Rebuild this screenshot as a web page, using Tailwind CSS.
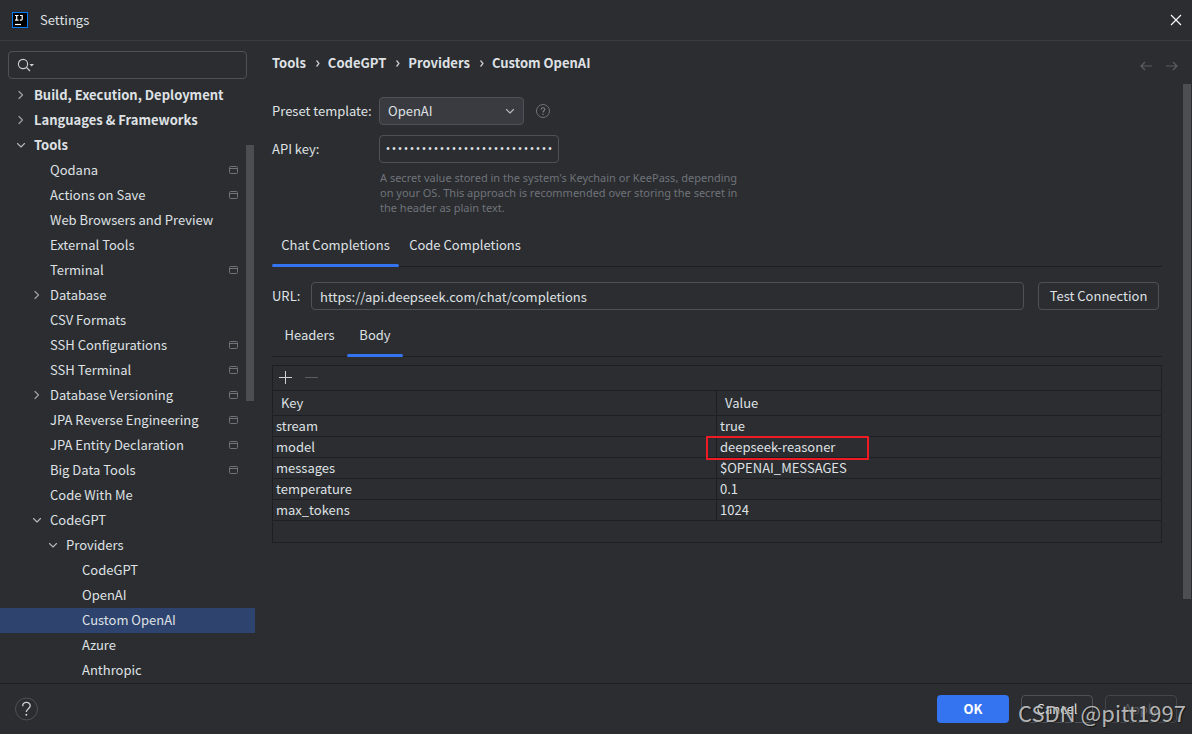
<!DOCTYPE html>
<html lang="en">
<head>
<meta charset="utf-8">
<meta name="viewport" content="width=device-width, initial-scale=1">
<title>Settings</title>
<script src="https://cdn.jsdelivr.net/npm/@tailwindcss/browser@4"></script>
</head>
<body class="relative flex min-h-screen flex-col overflow-x-hidden bg-[#2b2d30] font-['Noto_Sans_CJK_SC','Open_Sans',sans-serif] text-[13px] leading-5 text-[#dfe1e5]">

<svg class="hidden" aria-hidden="true">
  <symbol id="right" viewBox="0 0 16 16"><path d="M6 4.500 9.500 8 6 11.500" fill="none" stroke="#9da0a8" stroke-width="1.2" stroke-linecap="round" stroke-linejoin="round"/></symbol>
  <symbol id="down" viewBox="0 0 16 16"><path d="M4.500 6.500 8 10 11.500 6.500" fill="none" stroke="#b4b8bf" stroke-width="1.1" stroke-linecap="round" stroke-linejoin="round"/></symbol>
  <symbol id="project" viewBox="0 0 10 10"><rect x="0.5" y="1.5" width="8" height="7" rx="1" fill="none" stroke="#6f737a"/><path d="M1 3.5H8" stroke="#6f737a"/></symbol>
</svg>

<header class="flex h-[41px] items-center border-b border-[#393b40] pl-3 pr-2.5">
  <svg class="size-4" viewBox="0 0 16 16" aria-hidden="true">
    <rect width="16" height="16" fill="#087cfa"/><rect x="1" y="1" width="14" height="14" fill="#000"/>
    <path d="M3 3.500H6.500M4.700 3.500V8M3 8.200H6.500M8 3.500H10.700M10.200 3V7Q10.200 8.200 9.200 8.200H7.800" fill="none" stroke="#fff" stroke-width="1.2"/>
    <path d="M3 12.500H9" stroke="#fff" stroke-width="1.200"/>
  </svg>
  <h1 class="ml-3 flex-1">Settings</h1>
  <button type="button" aria-label="Close" class="size-3"><svg class="size-3" viewBox="0 0 12 12"><path d="M1 1 11 11M11 1 1 11" stroke="#fff" stroke-width="1.1" fill="none"/></svg></button>
</header>

<div class="flex flex-1">
  <aside class="relative w-[255px] shrink-0 pt-2.5">
    <label class="mx-2 flex h-7 items-center rounded border border-[#4e5157] pl-2">
      <svg class="h-4 w-5 shrink-0" viewBox="0 0 20 16" aria-hidden="true"><circle cx="6" cy="7" r="4.600" fill="none" stroke="#ced0d6" stroke-width="1.1"/><path d="M9.400 10.400 13 14" stroke="#ced0d6" stroke-width="1.2"/><path d="M12.500 7H17L14.700 9.400Z" fill="#ced0d6"/></svg>
      <input type="search" aria-label="Search settings" class="min-w-0 flex-1 bg-transparent outline-none">
    </label>
    <nav aria-label="Settings" class="mt-1 [&>a]:pb-0.5">
      <a href="#" class="flex h-[25px] items-center gap-[5px] pl-[13px] font-bold"><svg class="size-4"><use href="#right"/></svg>Build, Execution, Deployment</a>
      <a href="#" class="flex h-[25px] items-center gap-[5px] pl-[13px] font-bold"><svg class="size-4"><use href="#right"/></svg>Languages &amp; Frameworks</a>
      <a href="#" class="flex h-[25px] items-center gap-[5px] pl-[13px] font-bold"><svg class="size-4"><use href="#down"/></svg>Tools</a>
      <a href="#" class="flex h-[25px] items-center justify-between pl-[50px] pr-4">Qodana<svg class="size-2.5"><use href="#project"/></svg></a>
      <a href="#" class="flex h-[25px] items-center justify-between pl-[50px] pr-4">Actions on Save<svg class="size-2.5"><use href="#project"/></svg></a>
      <a href="#" class="flex h-[25px] items-center pl-[50px]">Web Browsers and Preview</a>
      <a href="#" class="flex h-[25px] items-center pl-[50px]">External Tools</a>
      <a href="#" class="flex h-[25px] items-center justify-between pl-[50px] pr-4">Terminal<svg class="size-2.5"><use href="#project"/></svg></a>
      <a href="#" class="flex h-[25px] items-center gap-[5px] pl-[29px]"><svg class="size-4"><use href="#right"/></svg>Database</a>
      <a href="#" class="flex h-[25px] items-center pl-[50px]">CSV Formats</a>
      <a href="#" class="flex h-[25px] items-center justify-between pl-[50px] pr-4">SSH Configurations<svg class="size-2.5"><use href="#project"/></svg></a>
      <a href="#" class="flex h-[25px] items-center justify-between pl-[50px] pr-4">SSH Terminal<svg class="size-2.5"><use href="#project"/></svg></a>
      <a href="#" class="flex h-[25px] items-center gap-[5px] pl-[29px] pr-4"><svg class="size-4"><use href="#right"/></svg><span class="flex-1">Database Versioning</span><svg class="size-2.5"><use href="#project"/></svg></a>
      <a href="#" class="flex h-[25px] items-center justify-between pl-[50px] pr-4">JPA Reverse Engineering<svg class="size-2.5"><use href="#project"/></svg></a>
      <a href="#" class="flex h-[25px] items-center justify-between pl-[50px] pr-4">JPA Entity Declaration<svg class="size-2.5"><use href="#project"/></svg></a>
      <a href="#" class="flex h-[25px] items-center justify-between pl-[50px] pr-4">Big Data Tools<svg class="size-2.5"><use href="#project"/></svg></a>
      <a href="#" class="flex h-[25px] items-center pl-[50px]">Code With Me</a>
      <a href="#" class="flex h-[25px] items-center gap-[5px] pl-[29px]"><svg class="size-4"><use href="#down"/></svg>CodeGPT</a>
      <a href="#" class="flex h-[25px] items-center gap-[5px] pl-[45px]"><svg class="size-4"><use href="#down"/></svg>Providers</a>
      <a href="#" class="flex h-[25px] items-center pl-[82px]">CodeGPT</a>
      <a href="#" class="flex h-[25px] items-center pl-[82px]">OpenAI</a>
      <a href="#" aria-current="page" class="flex h-[25px] items-center bg-[#2e436e] pl-[82px]">Custom OpenAI</a>
      <a href="#" class="flex h-[25px] items-center pl-[82px]">Azure</a>
      <a href="#" class="flex h-[25px] items-center pl-[82px]">Anthropic</a>
    </nav>
    <div class="absolute right-px top-[104px] h-64 w-2 bg-[#4d4e51]"></div>
  </aside>

  <main class="relative min-w-0 flex-1 pl-[17px] pr-[30px] pt-3">
    <div class="flex h-5 items-center">
      <nav aria-label="Breadcrumb" class="flex flex-1 items-center font-bold">
        <a href="#">Tools</a><svg class="h-4 w-[22px]" viewBox="0 0 22 16"><path d="M10.500 5.500 13 8.500 10.500 11.500" fill="none" stroke="#ced0d6" stroke-width="1.200"/></svg>
        <a href="#">CodeGPT</a><svg class="h-4 w-[22px]" viewBox="0 0 22 16"><path d="M10.500 5.500 13 8.500 10.500 11.500" fill="none" stroke="#ced0d6" stroke-width="1.200"/></svg>
        <a href="#">Providers</a><svg class="h-4 w-[22px]" viewBox="0 0 22 16"><path d="M10.500 5.500 13 8.500 10.500 11.500" fill="none" stroke="#ced0d6" stroke-width="1.200"/></svg>
        <a href="#" aria-current="page">Custom OpenAI</a>
      </nav>
      <div class="absolute right-3 top-[17px] flex gap-2.5">
        <button type="button" aria-label="Back" class="size-4"><svg viewBox="0 0 16 16"><path d="M14 8H3M7 4 3 8 7 12" fill="none" stroke="#5a5d63" stroke-width="1.200"/></svg></button>
        <button type="button" aria-label="Forward" class="size-4"><svg viewBox="0 0 16 16"><path d="M2 8H13M9 4 13 8 9 12" fill="none" stroke="#5a5d63" stroke-width="1.200"/></svg></button>
      </div>
    </div>

    <div class="mt-6 grid grid-cols-[107px_1fr] items-center gap-y-2.5">
      <label for="preset">Preset template:</label>
      <div class="flex items-center gap-3">
        <div class="relative">
          <select id="preset" class="h-7 w-[145px] appearance-none rounded border border-[#4e5157] bg-[#393b40] px-2 outline-none"><option>OpenAI</option></select>
          <svg class="pointer-events-none absolute right-1.5 top-1.5 size-4"><use href="#down"/></svg>
        </div>
        <button type="button" aria-label="Preset template help" class="flex size-3.5 items-center justify-center"><svg class="size-3.5" viewBox="0 0 14 14"><circle cx="7" cy="7" r="6.500" fill="none" stroke="#6f737a"/><path d="M5.200 5.500C5.200 3.200 8.800 3.200 8.800 5.400C8.800 6.700 7 6.800 7 8.400" fill="none" stroke="#7f838a" stroke-width="1.100"/><circle cx="7" cy="10.200" r=".7" fill="#7f838a"/></svg></button>
      </div>
      <label for="key">API key:</label>
      <input id="key" type="password" value="0123456789012345678901234567" class="h-7 w-[180px] rounded border border-[#4e5157] bg-transparent px-[5px] font-['Liberation_Mono',monospace] text-[10px] outline-none">
    </div>
    <p class="ml-[108px] mt-[7px] whitespace-nowrap font-['Noto_Sans',sans-serif] text-[11px] leading-[15px] text-[#6f737a]">A secret value stored in the system's Keychain or KeePass, depending<br>on your OS. This approach is recommended over storing the secret in<br>the header as plain text.</p>

    <div role="tablist" aria-label="Completion type" class="mt-[11px] flex h-[41px] border-b border-[#1e1f22]">
      <button type="button" role="tab" aria-selected="true" class="relative h-[41px] w-[127px] pb-[3px]">Chat Completions<span class="absolute inset-x-0 bottom-0 h-[3px] rounded-full bg-[#3574f0]"></span></button>
      <button type="button" role="tab" aria-selected="false" class="h-[41px] w-[132px] pb-[3px]">Code Completions</button>
    </div>

    <div class="mr-[3px] mt-[15px] flex items-center">
      <label for="url" class="w-[39px]">URL:</label>
      <input id="url" type="text" value="https://api.deepseek.com/chat/completions" class="h-7 min-w-0 flex-1 rounded border border-[#4e5157] bg-transparent px-2 outline-none">
      <button type="button" class="ml-3.5 h-7 w-[121px] rounded border border-[#4e5157]">Test Connection</button>
    </div>

    <div role="tablist" aria-label="Request parts" class="mt-1.5 flex h-[41px] border-b border-[#1e1f22]">
      <button type="button" role="tab" aria-selected="false" class="h-[41px] w-[75px] pb-[3px]">Headers</button>
      <button type="button" role="tab" aria-selected="true" class="relative h-[41px] w-14 pb-[3px]">Body<span class="absolute inset-x-0 bottom-0 h-[3px] rounded-full bg-[#3574f0]"></span></button>
    </div>

    <section aria-label="Body parameters" class="mt-2 border border-[#1e1f22] pb-[21px]">
      <div class="flex h-[25px] items-center gap-2.5 border-b border-[#1e1f22] pl-[5px]">
        <button type="button" aria-label="Add" class="size-4"><svg viewBox="0 0 16 16"><path d="M1 7.500H14M7.500 1V14" stroke="#ced0d6" fill="none"/></svg></button>
        <button type="button" aria-label="Remove" disabled class="size-4"><svg viewBox="0 0 16 16"><path d="M1 7.500H14" stroke="#5a5d63" fill="none"/></svg></button>
      </div>
      <table class="w-full table-fixed border-separate border-spacing-0 text-left">
        <thead><tr class="h-[25px]"><th class="border-b border-r border-[#1e1f22] p-0 pl-2 font-normal">Key</th><th class="border-b border-[#1e1f22] p-0 pl-2 font-normal">Value</th></tr></thead>
        <tbody>
          <tr class="h-[21px]"><td class="border-b border-r border-[#1e1f22] p-0 pl-[3px]">stream</td><td class="border-b border-[#1e1f22] p-0 pl-[3px]">true</td></tr>
          <tr class="h-[21px]"><td class="border-b border-r border-[#1e1f22] p-0 pl-[3px]">model</td><td class="relative border-b border-[#1e1f22] p-0 pl-[3px]">deepseek-reasoner<span class="absolute -left-[11px] -top-px h-6 w-[163px] border-2 border-[#ed1c24]"></span></td></tr>
          <tr class="h-[21px]"><td class="border-b border-r border-[#1e1f22] p-0 pl-[3px]">messages</td><td class="border-b border-[#1e1f22] p-0 pl-[3px]">$OPENAI_MESSAGES</td></tr>
          <tr class="h-[21px]"><td class="border-b border-r border-[#1e1f22] p-0 pl-[3px]">temperature</td><td class="border-b border-[#1e1f22] p-0 pl-[3px]">0.1</td></tr>
          <tr class="h-[21px]"><td class="border-b border-r border-[#1e1f22] p-0 pl-[3px]">max_tokens</td><td class="border-b border-[#1e1f22] p-0 pl-[3px]">1024</td></tr>
        </tbody>
      </table>
    </section>
    <div class="absolute right-px top-[43px] h-[515px] w-2 bg-[#4d4e51]"></div>
  </main>
</div>

<footer class="flex h-[51px] items-center gap-3 border-t border-[#1e1f22] px-[15px]">
  <button type="button" aria-label="Help" class="mr-auto size-6"><svg class="size-6" viewBox="0 0 24 24"><circle cx="11.500" cy="12" r="11" fill="none" stroke="#4e5157"/><path d="M7.700 9.200C7.700 4.200 15.200 4.200 15.200 8.800C15.200 11.600 11.300 11.800 11.300 15" fill="none" stroke="#ced0d6" stroke-width="1.300"/><circle cx="11.300" cy="17.800" r="1" fill="#ced0d6"/></svg></button>
  <button type="button" class="h-7 w-[72px] rounded bg-[#3574f0] font-bold text-white">OK</button>
  <button type="button" class="h-7 w-[72px] rounded border border-[#4e5157]">Cancel</button>
  <button type="button" disabled class="h-7 w-[72px] rounded border border-[#43454a] text-[#5a5d63]">Apply</button>
</footer>
<p class="pointer-events-none absolute bottom-1.5 right-1.5 whitespace-nowrap text-[22px] leading-8 text-[#c8c8c8]/90 [text-shadow:1px_1px_1px_#0008]">CSDN @pitt1997</p>
</body>
</html>
